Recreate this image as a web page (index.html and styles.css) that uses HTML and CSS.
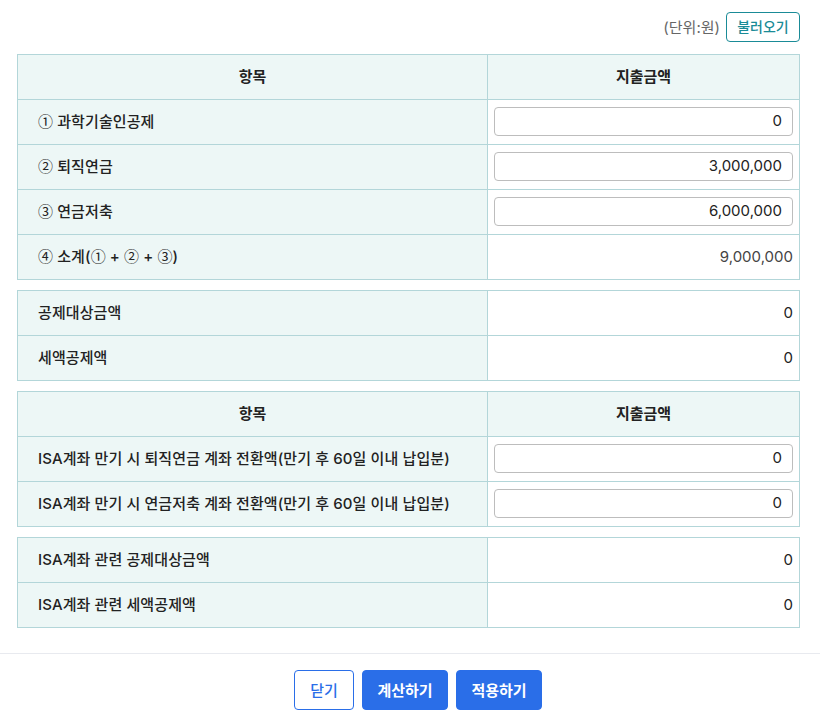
FILE: index.html
```html
<!DOCTYPE html>
<html lang="ko">
<head>
<meta charset="utf-8">
<link rel="stylesheet" href="styles.css">
</head>
<body>
<div class="page">
  <div class="toolbar">
    <span class="unit">(단위:원)</span>
    <button class="btn-load">불러오기</button>
  </div>

  <table class="grid">
    <tr><th class="col-l">항목</th><th class="col-r">지출금액</th></tr>
    <tr><td class="lbl"><span class="circ">①</span> 과학기술인공제</td><td class="val"><div class="inp">0</div></td></tr>
    <tr><td class="lbl"><span class="circ">②</span> 퇴직연금</td><td class="val"><div class="inp">3,000,000</div></td></tr>
    <tr><td class="lbl"><span class="circ">③</span> 연금저축</td><td class="val"><div class="inp">6,000,000</div></td></tr>
    <tr><td class="lbl"><span class="circ">④</span> 소계(<span class="circ">①</span> + <span class="circ">②</span> + <span class="circ">③</span>)</td><td class="val num gray">9,000,000</td></tr>
  </table>

  <table class="grid">
    <tr><td class="lbl col-l">공제대상금액</td><td class="val num col-r">0</td></tr>
    <tr><td class="lbl">세액공제액</td><td class="val num">0</td></tr>
  </table>

  <table class="grid">
    <tr><th class="col-l">항목</th><th class="col-r">지출금액</th></tr>
    <tr><td class="lbl">ISA계좌 만기 시 퇴직연금 계좌 전환액(만기 후 60일 이내 납입분)</td><td class="val"><div class="inp">0</div></td></tr>
    <tr><td class="lbl">ISA계좌 만기 시 연금저축 계좌 전환액(만기 후 60일 이내 납입분)</td><td class="val"><div class="inp">0</div></td></tr>
  </table>

  <table class="grid">
    <tr><td class="lbl col-l">ISA계좌 관련 공제대상금액</td><td class="val num col-r">0</td></tr>
    <tr><td class="lbl">ISA계좌 관련 세액공제액</td><td class="val num">0</td></tr>
  </table>
</div>
<div class="footer">
  <button class="btn btn-outline">닫기</button>
  <button class="btn btn-primary">계산하기</button>
  <button class="btn btn-primary">적용하기</button>
</div>
</body>
</html>
```

FILE: styles.css
```css
* { box-sizing: border-box; }
html, body { margin: 0; padding: 0; background: #fff; }
body {
  font-family: Inter, "Noto Sans CJK KR", sans-serif;
  color: #222;
  font-size: 15px;
}
.page {
  padding: 12px 20px 0 17px;
}
.toolbar {
  display: flex;
  justify-content: flex-end;
  align-items: center;
  gap: 6px;
  height: 30px;
  margin-bottom: 12px;
}
.unit {
  color: #666;
  font-size: 15px;
  padding-bottom: 2px;
}
.btn-load {
  font-family: inherit;
  height: 30px;
  width: 74px;
  padding: 0 0 2px;
  border: 1px solid #1a8b97;
  border-radius: 4px;
  background: #fff;
  color: #1a8b97;
  font-size: 14px;
  font-weight: 500;
}
.grid {
  width: 100%;
  border-collapse: collapse;
  table-layout: fixed;
  margin-bottom: 10px;
}
.grid th, .grid td {
  border: 1px solid #b3d6d9;
  height: 45px;
  padding: 0;
  font-size: 15px;
}
.col-l { width: 470px; }
.grid th {
  background: #edf7f6;
  font-weight: 700;
  text-align: center;
  padding-bottom: 3px;
}
.lbl {
  background: #edf7f6;
  padding: 0 0 3px 20px !important;
  font-weight: 500;
  letter-spacing: 0.1px;
}
.circ {
  font-family: "Noto Sans CJK KR", sans-serif;
  font-weight: 400;
}
.val {
  background: #fff;
  padding: 0 6px 1px !important;
}
.num {
  text-align: right;
  padding-right: 6px !important;
}
.gray { color: #444; }
.inp {
  height: 29px;
  border: 1px solid #bdbdbd;
  border-radius: 4px;
  text-align: right;
  padding-right: 10px;
  line-height: 25px;
  color: #222;
}
.footer {
  margin-top: 25px;
  border-top: 1px solid #e8eaef;
  padding-top: 16px;
  padding-left: 16px;
  display: flex;
  justify-content: center;
  gap: 8px;
}
.btn {
  font-family: inherit;
  height: 40px;
  padding: 0 0 2px;
  border-radius: 4px;
  font-size: 15px;
  font-weight: 700;
}
.btn-outline {
  background: #fff;
  border: 1px solid #2a6ee8;
  color: #2a6ee8;
  width: 60px;
  font-weight: 500;
}
.btn-primary {
  background: #2a6ee8;
  border: 1px solid #2a6ee8;
  color: #fff;
  width: 86px;
}
```
